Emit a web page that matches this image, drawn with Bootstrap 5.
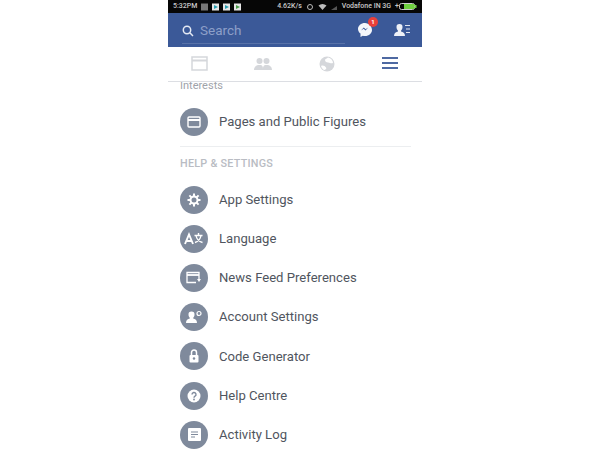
<!DOCTYPE html>
<html lang="en">
<head>
  <meta charset="UTF-8" />
  <meta name="viewport" content="width=device-width, initial-scale=1">
  <title>Facebook menu</title>
  <link href="https://cdn.jsdelivr.net/npm/bootstrap@5.3.3/dist/css/bootstrap.min.css" rel="stylesheet" />
  <style>
    body { background: #fff; overflow: hidden; height: 450px; font-family: Roboto, "Liberation Sans", sans-serif; }
    .phone { width: 254px; height: 450px; margin-left: 168px; overflow: hidden; }
    .status-bar { height: 13px; background: #060606; color: #c9c9c9; font-size: 7px; font-weight: 500; padding: 0 5px; white-space: nowrap; line-height: 13px; }
    .status-bar svg { display: block; }
    .blue-bar { height: 34px; background: #3b5998; padding: 0 0 0 14px; }
    .search-box { width: 163px; height: 28px; border-bottom: 1px solid #5872a8; color: #8d9fc8; font-size: 13.5px; gap: 6px; padding-top: 2px; }
    .msg-wrap { width: 16px; height: 16px; margin-left: 12px; margin-bottom: 1px; }
    .msg-wrap svg { display: block; }
    .msg-badge { position: absolute; top: -5px; right: -5px; width: 10px; height: 10px; border-radius: 50%; background: #e8403a; color: #fff; font-size: 6px; font-weight: 700; line-height: 10px; text-align: center; }
    .person-icon { margin-right: 11px; }
    .tab-bar { height: 35px; border-bottom: 1px solid #dcdee3; padding-bottom: 1px; }
    .tab-cell { width: 63.5px; }
    .menu-list { padding: 0 12px; color: #50555e; font-size: 13.1px; }
    .top-label { height: 7px; overflow: hidden; color: #a0a3aa; font-size: 11px; line-height: 7px; }
    .top-label span { display: block; margin-top: -3px; line-height: 13px; }
    .menu-row { height: 39.2px; gap: 11px; }
    .round-icon { width: 28px; height: 28px; border-radius: 50%; background: #7f8a9c; flex: none; }
    .first-row { margin-top: 13px; height: 39px; }
    .split { border-top: 1px solid #eceef0; margin: 5px -1px 0 0; padding-top: 9px; color: #b9bcc3; font-size: 10.8px; font-weight: 500; letter-spacing: .25px; line-height: 15px; }
    .after-head { margin-top: 9px; }
  </style>
</head>
<body>
  <div class="phone">
    <div class="status-bar d-flex align-items-center">
      <span>5:32PM</span>
      <svg class="ms-1" width="42" height="8" viewBox="0 0 42 8">
        <rect x="0" y="0.500" width="7" height="7" fill="#777"/>
        <rect x="11" y="0.500" width="7" height="7" fill="#e6e6e6"/><path d="M13 2l4 2-4 2z" fill="#2a9fb0"/>
        <rect x="22" y="0.500" width="7" height="7" fill="#e6e6e6"/><path d="M24 2l4 2-4 2z" fill="#2a9fb0"/>
        <rect x="33" y="0.500" width="7" height="7" fill="#e6e6e6"/><path d="M35 2l4 2-4 2z" fill="#4a9d4a"/>
      </svg>
      <span class="ms-auto">4.62K/s</span>
      <svg class="ms-1" width="8" height="8" viewBox="0 0 8 8"><circle cx="4" cy="4" r="2.500" fill="none" stroke="#bbb" stroke-width="1"/></svg>
      <svg class="ms-1" width="9" height="8" viewBox="0 0 9 8"><path d="M0.500 2.500a6 6 0 0 1 8 0L4.500 7z" fill="#bbb"/></svg>
      <svg class="ms-1" width="7" height="8" viewBox="0 0 7 8"><path d="M0 7L6 3v4z" fill="#555"/></svg>
      <span class="ms-1">Vodafone IN 3G</span>
      <span class="ms-1">+</span>
      <svg width="18" height="7" viewBox="0 0 18 7"><rect x="0.500" y="0.500" width="15" height="6" rx="2" fill="none" stroke="#ccc"/><rect x="5" y="1" width="10.500" height="5" fill="#6fd13f"/><rect x="16" y="2" width="1.500" height="3" fill="#6fd13f"/></svg>
    </div>

    <div class="blue-bar d-flex align-items-center">
      <div class="search-box d-flex align-items-center">
        <svg width="12" height="12" viewBox="0 0 12 12" fill="none" stroke="#e4e9f3" stroke-width="1.500"><circle cx="5" cy="5" r="3.700"/><path d="M7.800 7.800l3.200 3.200"/></svg>
        <span>Search</span>
      </div>
      <div class="msg-wrap position-relative">
        <svg width="16" height="16" viewBox="0 0 16 16"><path d="M8 1C4 1 1 3.700 1 7c0 1.900 1 3.500 2.500 4.600V15l2.300-1.300c.7.200 1.400.3 2.200.3 4 0 7-2.700 7-6S12 1 8 1z" fill="#f4f6fa"/><path d="M4 8.500l2.800-3 1.800 1.700 2.600-1.700-2.700 3-1.800-1.700z" fill="#3b5998"/></svg>
        <span class="msg-badge">1</span>
      </div>
      <svg class="person-icon ms-auto" width="17" height="14" viewBox="0 0 17 14"><path d="M5.500 1a3 3 0 0 1 3 3.200c0 1.500-.8 2.800-1.500 3.500v.8c2 .5 4 1.500 4 4.500H0c0-3 2-4 4-4.500v-.8C3.300 7 2.500 5.700 2.500 4.200A3 3 0 0 1 5.500 1z" fill="#eef1f7"/><path d="M11 2.500h5M12 6h4M12 9.500h4" stroke="#dfe4ef" stroke-width="1.200"/></svg>
    </div>

    <div class="tab-bar d-flex align-items-center">
      <div class="tab-cell d-flex justify-content-center">
        <svg width="17" height="15" viewBox="0 0 17 15" fill="none" stroke="#d5d7db" stroke-width="1.500"><rect x="1" y="1" width="15" height="13"/><path d="M1 4.500h15" stroke-width="2"/></svg>
      </div>
      <div class="tab-cell d-flex justify-content-center">
        <svg width="18" height="14" viewBox="0 0 18 14" fill="#d5d7db"><circle cx="5.500" cy="4" r="3"/><circle cx="12.500" cy="4" r="3"/><path d="M0 13c0-3 2-5 5.500-5S9 10 9 13zM9 13c0-3 0-5 3.500-5S18 10 18 13z"/></svg>
      </div>
      <div class="tab-cell d-flex justify-content-center">
        <svg width="16" height="16" viewBox="0 0 16 16"><circle cx="8" cy="8" r="7.500" fill="#d5d7db"/><path d="M9 1.500c3 .5 5 3 5 5.500-2 1-3-.5-5-.5S6 5 6 4s2-1.500 3-2.500zM2 10c2-1 4 0 5 1.500S6 14 5 14c-1.500-.8-2.500-2.200-3-4z" fill="#fff"/></svg>
      </div>
      <div class="tab-cell d-flex justify-content-center">
        <svg width="16" height="13" viewBox="0 0 16 13" fill="#4e69a2"><rect width="16" height="2"/><rect y="5" width="16" height="2"/><rect y="10" width="16" height="2"/></svg>
      </div>
    </div>

    <div class="menu-list">
      <div class="top-label"><span>Interests</span></div>
      <div class="menu-row first-row d-flex align-items-center">
        <div class="round-icon d-flex align-items-center justify-content-center">
          <svg width="14" height="12" viewBox="0 0 14 12" fill="none" stroke="#fff" stroke-width="1.400"><rect x="1" y="1" width="12" height="10" rx="1"/><path d="M1 4h12" stroke-width="2"/></svg>
        </div>
        <span>Pages and Public Figures</span>
      </div>
      <div class="split">HELP &amp; SETTINGS</div>
      <div class="after-head">
        <div class="menu-row d-flex align-items-center">
          <div class="round-icon d-flex align-items-center justify-content-center">
            <svg width="14" height="14" viewBox="0 0 14 14"><circle cx="7" cy="7" r="3.500" fill="none" stroke="#fff" stroke-width="2"/><path d="M7 .5v3M7 10.500v3M.5 7h3M10.500 7h3M2.400 2.400l2 2M9.600 9.600l2 2M11.600 2.400l-2 2M4.400 9.600l-2 2" stroke="#fff" stroke-width="2"/></svg>
          </div>
          <span>App Settings</span>
        </div>
        <div class="menu-row d-flex align-items-center">
          <div class="round-icon d-flex align-items-center justify-content-center">
            <svg width="20" height="14" viewBox="0 0 20 14" fill="none" stroke="#fff" stroke-width="1.900"><path d="M1 12L5 2.500 9 12M2.500 9h5"/><path d="M10.500 3.500h8M14.500 1v2.500M12 3.500c.5 3 3 6 6.500 7M17 3.500c-.5 3-3 6-6 7" stroke-width="1.400"/></svg>
          </div>
          <span>Language</span>
        </div>
        <div class="menu-row d-flex align-items-center">
          <div class="round-icon d-flex align-items-center justify-content-center">
            <svg width="16" height="13" viewBox="0 0 16 13" fill="none" stroke="#fff" stroke-width="1.300"><path d="M13 8V1.500H1v10h9"/><path d="M1 4h12" stroke-width="1.800"/><path d="M11 8h4l-2 3z" fill="#fff" stroke="none"/></svg>
          </div>
          <span>News Feed Preferences</span>
        </div>
        <div class="menu-row d-flex align-items-center">
          <div class="round-icon d-flex align-items-center justify-content-center">
            <svg width="16" height="14" viewBox="0 0 16 14"><path d="M5.500 1.500a3 3 0 0 1 3 3.200c0 1.300-.7 2.500-1.300 3v.8c2 .5 3.800 1.500 3.800 4.500H0c0-3 1.800-4 3.800-4.500v-.8c-.6-.5-1.300-1.700-1.300-3a3 3 0 0 1 3-3.200z" fill="#fff"/><circle cx="13" cy="3.500" r="2" fill="none" stroke="#fff" stroke-width="1.200"/></svg>
          </div>
          <span>Account Settings</span>
        </div>
        <div class="menu-row d-flex align-items-center">
          <div class="round-icon d-flex align-items-center justify-content-center">
            <svg width="10" height="14" viewBox="0 0 10 14"><path d="M2.500 6V3.500a2.500 2.500 0 0 1 5 0V6" fill="none" stroke="#fff" stroke-width="1.500"/><rect x="0.500" y="6" width="9" height="7.500" rx="1" fill="#fff"/><circle cx="5" cy="9.500" r="1.200" fill="#7f8a9c"/></svg>
          </div>
          <span>Code Generator</span>
        </div>
        <div class="menu-row d-flex align-items-center">
          <div class="round-icon d-flex align-items-center justify-content-center">
            <svg width="14" height="14" viewBox="0 0 14 14"><circle cx="7" cy="7" r="6.500" fill="#fff"/><path d="M5 5.500a2 2 0 1 1 3 1.700c-.7.400-1 .800-1 1.500" fill="none" stroke="#7f8a9c" stroke-width="1.400"/><circle cx="7" cy="10.500" r=".9" fill="#7f8a9c"/></svg>
          </div>
          <span>Help Centre</span>
        </div>
        <div class="menu-row d-flex align-items-center">
          <div class="round-icon d-flex align-items-center justify-content-center">
            <svg width="13" height="13" viewBox="0 0 13 13"><rect width="13" height="13" rx="1" fill="#fff"/><path d="M3 4h7M3 6.500h7M3 9h4" stroke="#7f8a9c" stroke-width="1.100"/></svg>
          </div>
          <span>Activity Log</span>
        </div>
      </div>
    </div>
  </div>
  <script src="https://cdn.jsdelivr.net/npm/bootstrap@5.3.3/dist/js/bootstrap.bundle.min.js"></script>
</body>
</html>
